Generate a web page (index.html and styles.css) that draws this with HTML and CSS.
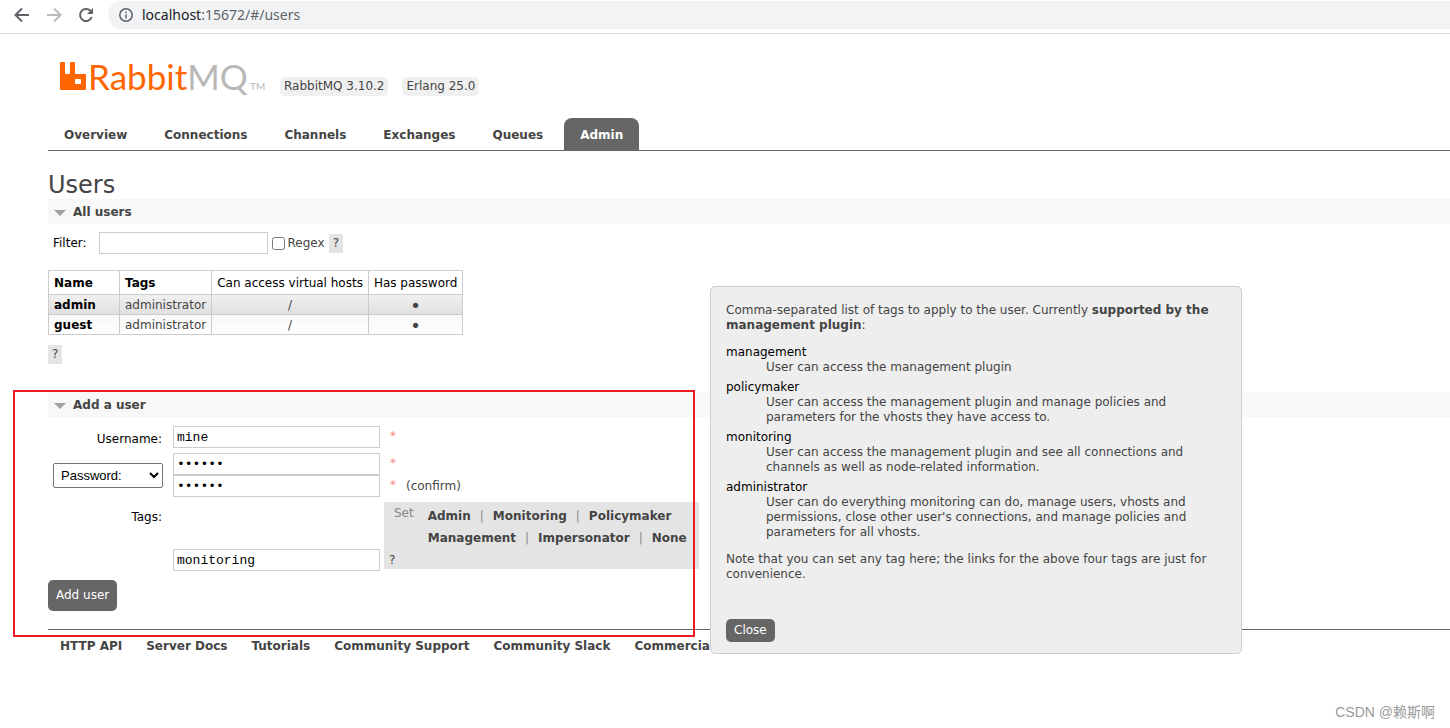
FILE: index.html
```html
<!DOCTYPE html>
<html lang="en">
<head>
<meta charset="utf-8">
<title>RabbitMQ Management</title>
<link rel="stylesheet" href="styles.css">
</head>
<body>
<div class="browser-bar">
  <button class="nav-button" aria-label="Back"><svg width="16" height="16" viewBox="0 0 16 16" fill="none" stroke="#5f6368" stroke-width="2"><path d="M15 8H2M8 1.5L1.5 8L8 14.5"/></svg></button>
  <button class="nav-button" aria-label="Forward"><svg width="16" height="16" viewBox="0 0 16 16" fill="none" stroke="#babcbe" stroke-width="2"><path d="M1 8H14M8 1.5L14.5 8L8 14.5"/></svg></button>
  <button class="nav-button" aria-label="Reload"><svg width="16" height="16" viewBox="0 0 16 16" fill="none" stroke="#5f6368" stroke-width="2"><path d="M13.7 10A6 6 0 1 1 12.3 3.8L13.5 5"/><path d="M15 1V7H9Z" fill="#5f6368" stroke="none"/></svg></button>
  <div class="address">
    <svg width="14" height="14" viewBox="0 0 14 14" fill="none" stroke="#5f6368" stroke-width="1.5"><circle cx="7" cy="7" r="6.2"/><path d="M7 6.2V10.5M7 3.4V5"/></svg>
    <span><span class="host">localhost</span>:15672/#/users</span>
  </div>
</div>
<div class="page">
  <header class="masthead">
    <a class="logo" href="#/" aria-label="RabbitMQ">
      <svg width="210" height="40" viewBox="0 0 210 40">
        <path fill="#f60" fill-rule="evenodd" d="M1 6H4Q5 6 5 7V17Q5 18 6 18H9Q10 18 10 17V7Q10 6 11 6H14Q15 6 15 7V17Q15 18 16 18H25Q26 18 26 19V33Q26 34 25 34H1Q0 34 0 33V7Q0 6 1 6ZM16 23Q15 23 15 24V27Q15 28 16 28H20Q21 28 21 27V24Q21 23 20 23Z"/>
        <text x="28" y="34" class="wordmark"><tspan fill="#f60">Rabbit</tspan><tspan fill="#b8b8b8">MQ</tspan></text>
        <text x="190" y="34" class="trademark">TM</text>
      </svg>
    </a>
    <span class="version">RabbitMQ 3.10.2</span>
    <span class="version">Erlang 25.0</span>
  </header>
  <nav class="tabs">
    <a href="#/">Overview</a><a href="#/connections">Connections</a><a href="#/channels">Channels</a><a href="#/exchanges">Exchanges</a><a href="#/queues">Queues</a><a class="selected" href="#/users">Admin</a>
  </nav>
  <main>
    <h1>Users</h1>
    <section>
      <h2>All users</h2>
      <form class="filter">
        <label for="filter">Filter:</label>
        <input class="field filter-field" id="filter" type="text">
        <label class="regex"><input type="checkbox">Regex</label>
        <button class="help" type="button">?</button>
      </form>
      <table class="list">
        <thead><tr><th><b>Name</b></th><th><b>Tags</b></th><th>Can access virtual hosts</th><th>Has password</th></tr></thead>
        <tbody>
          <tr class="alt1"><td><a href="#/users/admin">admin</a></td><td>administrator</td><td class="c">/</td><td class="c dot">•</td></tr>
          <tr class="alt2"><td><a href="#/users/guest">guest</a></td><td>administrator</td><td class="c">/</td><td class="c dot">•</td></tr>
        </tbody>
      </table>
      <button class="help" type="button">?</button>
    </section>
    <section class="add-user">
      <h2>Add a user</h2>
      <form>
        <div class="form-grid">
          <label for="username">Username:</label>
          <div class="entry"><input class="field" id="username" type="text" value="mine"><span class="mand">*</span></div>
          <select aria-label="Password type"><option>Password:</option></select>
          <div>
            <div class="entry"><input class="field" type="password" value="secret" aria-label="Password"><span class="mand">*</span></div>
            <div class="entry"><input class="field" type="password" value="secret" aria-label="Confirm password"><span class="mand">*</span><span class="confirm">(confirm)</span></div>
          </div>
          <label class="tags-label" for="tags">Tags:</label>
          <div class="tags-row">
            <input class="field" id="tags" type="text" value="monitoring">
            <div class="tag-links">
              <span class="set">Set</span>
              <div><a href="#">Admin</a><i>|</i><a href="#">Monitoring</a><i>|</i><a href="#">Policymaker</a></div>
              <div class="second"><a href="#">Management</a><i>|</i><a href="#">Impersonator</a><i>|</i><a href="#">None</a></div>
              <button class="tag-help" type="button">?</button>
            </div>
          </div>
        </div>
        <button class="primary" type="submit">Add user</button>
      </form>
      <div class="highlight"></div>
    </section>
  </main>
  <footer>
    <a href="#">HTTP API</a><a href="#">Server Docs</a><a href="#">Tutorials</a><a href="#">Community Support</a><a href="#">Community Slack</a><a href="#">Commercial Support</a>
  </footer>
</div>
<div class="popup" role="dialog" aria-label="Tags help">
  <p>Comma-separated list of tags to apply to the user. Currently <b>supported by the management plugin</b>:</p>
  <dl>
    <dt>management</dt><dd>User can access the management plugin</dd>
    <dt>policymaker</dt><dd>User can access the management plugin and manage policies and parameters for the vhosts they have access to.</dd>
    <dt>monitoring</dt><dd>User can access the management plugin and see all connections and channels as well as node-related information.</dd>
    <dt>administrator</dt><dd>User can do everything monitoring can do, manage users, vhosts and permissions, close other user's connections, and manage policies and parameters for all vhosts.</dd>
  </dl>
  <p>Note that you can set any tag here; the links for the above four tags are just for convenience.</p>
  <button class="primary close" type="button">Close</button>
</div>
<div class="watermark">CSDN @赖斯啊</div>
</body>
</html>
```
FILE: styles.css
```css
* { box-sizing: border-box; }
body { margin: 0; background: #fff; color: #444; font: 12px/15px "DejaVu Sans", Verdana, sans-serif; }
a { color: #444; text-decoration: none; font-weight: bold; }
button { font: inherit; border: 0; padding: 0; background: none; color: inherit; }
svg { display: block; }

.browser-bar { display: flex; align-items: center; gap: 16px; height: 34px; padding: 0 0 4px 14px; border-bottom: 1px solid #dadce0; }
.address { flex: 1; display: flex; align-items: center; gap: 9px; height: 28px; margin-left: -2px; padding-left: 11px; border-radius: 14px 0 0 14px; background: #f1f3f4; color: #5f6368; font: 14px/20px "Noto Sans", sans-serif; }
.host { color: #202124; }

.page { padding-left: 48px; }
.masthead { display: flex; align-items: flex-end; height: 62px; padding-left: 12px; gap: 14px; }
.logo { margin: 0 -4px 0 0; }
.wordmark { font: 35px Lato, sans-serif; }
.trademark { font: 10px Lato, sans-serif; fill: #b8b8b8; }
.version { padding: 2px 4px; border-radius: 5px; background: #f0f0f0; }

.tabs { display: flex; gap: 5px; margin-top: 22px; border-bottom: 1px solid #666; }
.tabs a { padding: 10px 16px 7px; border-radius: 8px 8px 0 0; }
.tabs .selected { background: #666; color: #fff; }

h1 { margin: 21px 0 0; font-size: 24px; line-height: 27px; font-weight: normal; }
h2 { display: flex; align-items: center; gap: 7px; margin: 0; padding: 6px 6px 4px; background: #f8f8f8; font-size: 12px; }
h2::before { content: ""; border: solid transparent; border-width: 6px 6px 0; border-top-color: #a0a0a0; }

.field { width: 207px; height: 22px; margin: 0; padding: 2px 3px; border: 1px solid #ccc; background: #fff; color: #000; font: 13px "Liberation Mono", monospace; }
.filter { display: flex; align-items: center; margin: 8px 0 16px; padding-left: 5px; }
.filter > label:first-child { color: #000; }
.filter-field { width: 169px; margin: 0 4px 0 12px; }
.regex { display: flex; align-items: center; gap: 3px; margin-right: 4px; }
.regex input { width: 13px; height: 13px; margin: 0; }
.help { display: block; padding: 2px 4px; background: #e4e4e4; }

.list { border-collapse: collapse; margin-bottom: 10px; }
.list th, .list td { border: 1px solid #ccc; padding: 3px 5px 1px; }
.list th { padding: 5px 5px 3px; color: #000; font-weight: normal; text-align: left; }
.list th:first-child { width: 71px; }
.list td a { color: #000; }
.list .c { text-align: center; }
.list .dot { font-size: 18px; }
.alt1 { background: linear-gradient(#f0f0f0, #dfdfdf); }
.alt2 { background: linear-gradient(#f8f8f8, #fff); }

.add-user { position: relative; margin-top: 28px; }
.highlight { position: absolute; left: -35px; top: -2px; width: 682px; height: 247px; border: 2px solid #ed1c24; pointer-events: none; }
.form-grid { display: grid; grid-template-columns: 110px 1fr; gap: 5px 10px; padding: 9px 0 9px 5px; align-items: center; }
.form-grid > label { color: #000; text-align: right; padding: 5px 1px 0 0; }
.form-grid > .tags-label { align-self: start; padding-top: 8px; }
select { width: 110px; height: 25px; padding: 0 3px; border: 1px solid #767676; border-radius: 2px; background: #fff; color: #000; font: 13px "Liberation Sans", sans-serif; }
.entry { display: flex; }
.mand { margin-left: 10px; padding-top: 3px; color: #f88; }
.confirm { margin-left: 10px; padding-top: 4px; }
.tags-row { display: flex; align-items: flex-end; gap: 4px; }
.tag-links { display: grid; grid-template-columns: auto 1fr; grid-auto-rows: 22px; align-items: end; column-gap: 14px; width: 315px; margin-bottom: 2px; padding: 0 9px 1px 10px; background: #e4e4e4; }
.tag-links i { margin: 0 9px; color: #888; font-style: normal; }
.set { align-self: center; color: #888; }
.second { grid-column: 2; }
.tag-help { justify-self: start; margin-left: -5px; }

.primary { padding: 8px; border-radius: 5px; background: #666; color: #fff; }
footer { display: flex; gap: 24px; margin-top: 18px; padding: 9px 12px; border-top: 1px solid #666; white-space: nowrap; overflow: hidden; }

.popup { position: absolute; left: 710px; top: 286px; width: 532px; padding: 16px 15px 11px; border: 1px solid #ccc; border-radius: 5px; background: #eee; }
.popup p { margin: 0 0 12px; }
.popup dl { margin: 0 0 12px; }
.popup dt { color: #000; }
.popup dd { margin: 0 0 5px 40px; }
.popup dd:last-child { margin-bottom: 0; }
.popup .close { margin-top: 25px; padding: 4px 8px; }
.watermark { position: absolute; right: 15px; bottom: 6px; color: #999; font: 14px/20px "Liberation Sans", "Noto Sans CJK SC", sans-serif; }
```
